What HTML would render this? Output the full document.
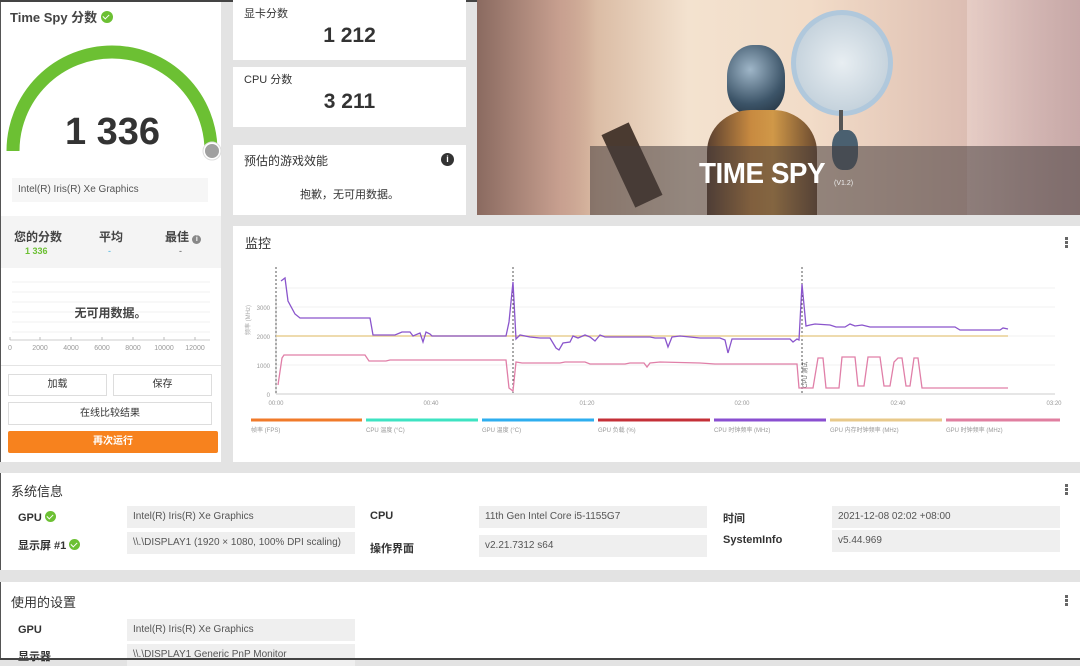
<!DOCTYPE html>
<html><head><meta charset="utf-8">
<style>
*{margin:0;padding:0;box-sizing:border-box}
body{width:1080px;height:660px;overflow:hidden;background:#e3e3e3;font-family:"Liberation Sans","Noto Sans CJK SC",sans-serif;color:#333;position:relative}
.abs{position:absolute}
.card{position:absolute;background:#fff}
.box{position:absolute;background:#efefef;font-size:10px;color:#555;padding:5px 6px;font-family:"Liberation Sans","Noto Sans CJK SC",sans-serif}
.lbl{position:absolute;font-size:11px;font-weight:bold;color:#333}
.chk{display:inline-block;width:11px;height:11px;border-radius:50%;background:#6cc033;vertical-align:-1px;position:relative}
.chk:after{content:"";position:absolute;left:3px;top:2px;width:3px;height:5px;border:solid #fff;border-width:0 1.6px 1.6px 0;transform:rotate(45deg)}
.dots{position:absolute;width:3px}
.dots i{display:block;width:3px;height:3px;background:#666;margin-bottom:1px}
.btn{position:absolute;background:#fff;border:1px solid #ddd;font-size:10px;text-align:center;color:#333}
</style></head><body>
<div class="abs" style="left:0;top:0;width:1080px;height:2px;background:#444"></div>
<!-- left panel -->
<div class="card" style="left:0;top:2px;width:221px;height:460px;border-left:1px solid #555"></div>
<div class="abs" style="left:10px;top:7px;font-size:13px;font-weight:bold;color:#444">Time Spy 分数 <span class="chk" style="width:12px;height:12px"></span></div>
<svg class="abs" style="left:0;top:0" width="225" height="170">
<path d="M13 151 A99 99 0 0 1 211 151" fill="none" stroke="#6cc033" stroke-width="13"/>
<circle cx="212" cy="151" r="9" fill="#fff" stroke="#ddd"/>
<circle cx="212" cy="151" r="7" fill="#a0a0a0"/>
</svg>
<div class="abs" style="left:0;width:225px;top:111px;text-align:center;font-size:38px;font-weight:bold;color:#333">1 336</div>
<div class="abs" style="left:12px;top:178px;width:196px;height:24px;background:#f6f6f6;font-size:10px;color:#555;padding:6px 6px">Intel(R) Iris(R) Xe Graphics</div>
<div class="abs" style="left:1px;top:216px;width:220px;height:52px;background:#f4f4f4"></div>
<div class="abs" style="left:14px;top:228px;font-size:12px;font-weight:bold;color:#444">您的分数</div>
<div class="abs" style="left:25px;top:246px;font-size:9px;font-weight:bold;color:#6cc033">1 336</div>
<div class="abs" style="left:99px;top:228px;font-size:12px;font-weight:bold;color:#444">平均</div>
<div class="abs" style="left:108px;top:246px;font-size:9px;color:#3ab0e0">-</div>
<div class="abs" style="left:165px;top:228px;font-size:12px;font-weight:bold;color:#444">最佳 <span style="display:inline-block;width:9px;height:9px;border-radius:50%;background:#888;color:#fff;font-size:7px;text-align:center;line-height:9px">i</span></div>
<div class="abs" style="left:179px;top:246px;font-size:9px;color:#555">-</div>
<svg class="abs" style="left:0;top:270px" width="221" height="95">
<g stroke="#f0f0f0"><line x1="12" y1="12" x2="210" y2="12"/><line x1="12" y1="22" x2="210" y2="22"/><line x1="12" y1="32" x2="210" y2="32"/><line x1="12" y1="42" x2="210" y2="42"/><line x1="12" y1="52" x2="210" y2="52"/><line x1="12" y1="62" x2="210" y2="62"/></g>
<line x1="10" y1="70" x2="210" y2="70" stroke="#ccc"/>
<g stroke="#bbb"><line x1="10" y1="67" x2="10" y2="70"/><line x1="40" y1="67" x2="40" y2="70"/><line x1="71" y1="67" x2="71" y2="70"/><line x1="102" y1="67" x2="102" y2="70"/><line x1="133" y1="67" x2="133" y2="70"/><line x1="164" y1="67" x2="164" y2="70"/><line x1="195" y1="67" x2="195" y2="70"/></g>
<g font-size="7" fill="#999" text-anchor="middle" font-family="Liberation Sans"><text x="10" y="80">0</text><text x="40" y="80">2000</text><text x="71" y="80">4000</text><text x="102" y="80">6000</text><text x="133" y="80">8000</text><text x="164" y="80">10000</text><text x="195" y="80">12000</text></g>
</svg>
<div class="abs" style="left:0;width:221px;top:304px;text-align:center;font-size:12px;font-weight:bold;color:#444">无可用数据。</div>
<div class="abs" style="left:1px;top:365px;width:220px;height:1px;background:#e4e4e4"></div>
<div class="btn" style="left:8px;top:374px;width:99px;height:22px;line-height:20px">加载</div>
<div class="btn" style="left:113px;top:374px;width:99px;height:22px;line-height:20px">保存</div>
<div class="btn" style="left:8px;top:402px;width:204px;height:23px;line-height:21px">在线比较结果</div>
<div class="abs" style="left:8px;top:431px;width:210px;height:22px;background:#f7821e;border-radius:2px;color:#fff;font-size:10px;font-weight:bold;text-align:center;line-height:22px">再次运行</div>

<!-- score cards -->
<div class="card" style="left:233px;top:0;width:233px;height:60px"></div>
<div class="abs" style="left:244px;top:5px;font-size:11px;color:#333">显卡分数</div>
<div class="abs" style="left:233px;width:233px;top:24px;text-align:center;font-size:21px;font-weight:bold;color:#333">1 212</div>
<div class="card" style="left:233px;top:67px;width:233px;height:60px"></div>
<div class="abs" style="left:244px;top:71px;font-size:11px;color:#333">CPU 分数</div>
<div class="abs" style="left:233px;width:233px;top:90px;text-align:center;font-size:21px;font-weight:bold;color:#333">3 211</div>
<div class="card" style="left:233px;top:145px;width:233px;height:70px"></div>
<div class="abs" style="left:244px;top:152px;font-size:12px;color:#333">预估的游戏效能</div>
<div class="abs" style="left:441px;top:153px;width:13px;height:13px;border-radius:50%;background:#333;color:#fff;font-size:9px;font-weight:bold;text-align:center;line-height:13px">i</div>
<div class="abs" style="left:233px;width:233px;top:186px;text-align:center;font-size:11px;color:#333">抱歉，无可用数据。</div>

<!-- image -->
<div class="abs" style="left:477px;top:0;width:603px;height:215px;overflow:hidden;background:linear-gradient(90deg,#b49080 0%,#d8b8a0 18%,#f3e2cf 35%,#f2dcc8 55%,#e6cbbb 70%,#d9b9b0 85%,#c4a09c 100%)">
<div class="abs" style="left:0;top:0;width:120px;height:215px;background:linear-gradient(90deg,#8a6a60,#c8a090 70%,rgba(200,160,140,0))"></div>
<div class="abs" style="left:250px;top:45px;width:58px;height:70px;border-radius:45% 45% 40% 40%;background:radial-gradient(circle at 40% 35%,#9fb6c8,#3c5468 60%,#1e2a36)"></div>
<div class="abs" style="left:230px;top:110px;width:110px;height:105px;border-radius:40% 40% 0 0;background:linear-gradient(90deg,#5a4030,#c88a40 40%,#d09848 60%,#6a4a30)"></div>
<div class="abs" style="left:314px;top:10px;width:102px;height:106px;border-radius:50%;border:5px solid #b0c8dc;background:radial-gradient(circle,#e8eef2,#b8c8d4)"></div>
<div class="abs" style="left:362px;top:110px;width:4px;height:30px;background:#555"></div>
<div class="abs" style="left:355px;top:130px;width:26px;height:40px;border-radius:40%;background:#4a6070"></div>
<div class="abs" style="left:140px;top:125px;width:30px;height:80px;transform:rotate(-25deg);background:#4a3a30"></div>
<div class="abs" style="left:490px;top:0;width:113px;height:215px;background:linear-gradient(90deg,rgba(240,220,215,.5),rgba(200,170,170,.8))"></div>
<div class="abs" style="left:113px;top:146px;width:490px;height:69px;background:rgba(70,60,60,.55)"></div>
<div class="abs" style="left:222px;top:158px;font-size:29px;font-weight:bold;color:#fff;transform:scaleX(.96);transform-origin:left;letter-spacing:-.5px">TIME SPY</div>
<div class="abs" style="left:357px;top:180px;font-size:7px;color:#eee">(V1.2)</div>
</div>

<!-- monitor -->
<div class="card" style="left:233px;top:226px;width:847px;height:236px"></div>
<div class="abs" style="left:245px;top:233px;font-size:13px;color:#333">监控</div>
<div class="dots" style="left:1065px;top:237px"><i></i><i></i><i></i></div>
<svg class="abs" style="left:0;top:0" width="1080" height="460" font-family="Liberation Sans">
<g stroke="#f0f0f0"><line x1="276" y1="307" x2="1055" y2="307"/><line x1="276" y1="336" x2="1055" y2="336"/><line x1="276" y1="365" x2="1055" y2="365"/><line x1="276" y1="288" x2="1055" y2="288"/></g>
<line x1="276" y1="394" x2="1055" y2="394" stroke="#ccc"/>
<line x1="276" y1="297" x2="276" y2="394" stroke="#ccc"/>
<g stroke="#555" stroke-dasharray="2,2"><line x1="276" y1="267" x2="276" y2="394"/><line x1="513" y1="267" x2="513" y2="394"/><line x1="802" y1="267" x2="802" y2="394"/></g>
<g font-size="6" fill="#999" text-anchor="end"><text x="270" y="310">3000</text><text x="270" y="339">2000</text><text x="270" y="368">1000</text><text x="270" y="397">0</text></g>
<text x="250" y="335" font-size="6" fill="#aaa" transform="rotate(-90 250 335)">频率 (MHz)</text>
<g font-size="6" fill="#999" text-anchor="middle"><text x="276" y="405">00:00</text><text x="431" y="405">00:40</text><text x="587" y="405">01:20</text><text x="742" y="405">02:00</text><text x="898" y="405">02:40</text><text x="1054" y="405">03:20</text></g>
<text x="807" y="388" font-size="6" fill="#666" transform="rotate(-90 807 388)">CPU 测试</text>
<line x1="276" y1="336" x2="1008" y2="336" stroke="#e8cf94" stroke-width="1.6"/>
<polyline fill="none" stroke="#8a55cc" stroke-width="1.3" points="281,281 285,278 288,301 295,314 300,318 340,318 370,318 373,335 395,335 402,332 410,332 413,336 420,333 423,342 426,332 430,334 432,336 506,336 509,322 513,282 516,339 520,335 530,337 540,338 550,338 556,348 559,350 563,343 570,342 573,336 578,338 585,335 590,337 595,341 600,335 605,337 650,337 655,338 665,338 668,347 672,337 680,336 690,337 700,338 720,338 725,340 728,353 732,339 790,339 793,342 797,339 799,340 802,284 806,326 810,325 815,324 830,325 836,327 845,327 850,324 855,326 862,325 870,327 940,327 955,327 960,330 1000,330 1003,328 1008,329"/>
<polyline fill="none" stroke="#e07fa8" stroke-width="1.3" points="278,385 282,358 284,355 365,355 369,361 386,361 390,360 506,360 509,388 513,391 516,362 522,363 560,363 565,362 585,362 590,364 625,364 630,363 644,363 647,367 650,363 660,362 700,363 715,364 760,364 797,364 799,388 813,388 818,358 823,358 826,388 839,388 842,357 855,357 858,386 864,386 868,357 880,357 884,386 890,386 894,362 898,358 902,358 906,386 910,386 914,358 918,358 922,388 1008,388"/>
<g stroke-width="3"><line x1="251" y1="420" x2="362" y2="420" stroke="#f07a2a"/><line x1="366" y1="420" x2="478" y2="420" stroke="#3de3c2"/><line x1="482" y1="420" x2="594" y2="420" stroke="#2eaeef"/><line x1="598" y1="420" x2="710" y2="420" stroke="#c43038"/><line x1="714" y1="420" x2="826" y2="420" stroke="#8a4fd0"/><line x1="830" y1="420" x2="942" y2="420" stroke="#e8c98a"/><line x1="946" y1="420" x2="1060" y2="420" stroke="#e07fa0"/></g>
<g font-size="6" fill="#999"><text x="251" y="432">帧率 (FPS)</text><text x="366" y="432">CPU 温度 (°C)</text><text x="482" y="432">GPU 温度 (°C)</text><text x="598" y="432">GPU 负载 (%)</text><text x="714" y="432">CPU 时钟频率 (MHz)</text><text x="830" y="432">GPU 内存时钟频率 (MHz)</text><text x="946" y="432">GPU 时钟频率 (MHz)</text></g>
</svg>

<!-- system info -->
<div class="card" style="left:0;top:473px;width:1080px;height:97px;border-left:1px solid #555"></div>
<div class="abs" style="left:11px;top:481px;font-size:13px;color:#333">系统信息</div>
<div class="dots" style="left:1065px;top:484px"><i></i><i></i><i></i></div>
<div class="lbl" style="left:18px;top:511px">GPU <span class="chk"></span></div>
<div class="box" style="left:127px;top:506px;width:228px;height:22px">Intel(R) Iris(R) Xe Graphics</div>
<div class="lbl" style="left:18px;top:537px">显示屏 #1 <span class="chk"></span></div>
<div class="box" style="left:127px;top:532px;width:228px;height:22px">\\.\DISPLAY1 (1920 × 1080, 100% DPI scaling)</div>
<div class="lbl" style="left:370px;top:510px">CPU</div>
<div class="box" style="left:479px;top:506px;width:228px;height:22px">11th Gen Intel Core i5-1155G7</div>
<div class="lbl" style="left:370px;top:540px">操作界面</div>
<div class="box" style="left:479px;top:535px;width:228px;height:22px">v2.21.7312 s64</div>
<div class="lbl" style="left:723px;top:510px">时间</div>
<div class="box" style="left:832px;top:506px;width:228px;height:22px">2021-12-08 02:02 +08:00</div>
<div class="lbl" style="left:723px;top:534px">SystemInfo</div>
<div class="box" style="left:832px;top:530px;width:228px;height:22px">v5.44.969</div>

<!-- settings -->
<div class="card" style="left:0;top:582px;width:1080px;height:78px;border-left:1px solid #555"></div>
<div class="abs" style="left:11px;top:592px;font-size:13px;color:#333">使用的设置</div>
<div class="dots" style="left:1065px;top:595px"><i></i><i></i><i></i></div>
<div class="lbl" style="left:18px;top:624px">GPU</div>
<div class="box" style="left:127px;top:619px;width:228px;height:22px">Intel(R) Iris(R) Xe Graphics</div>
<div class="lbl" style="left:18px;top:648px">显示器</div>
<div class="box" style="left:127px;top:644px;width:228px;height:22px">\\.\DISPLAY1 Generic PnP Monitor</div>
<div class="abs" style="left:0;top:658px;width:1080px;height:2px;background:#444"></div>
</body></html>
